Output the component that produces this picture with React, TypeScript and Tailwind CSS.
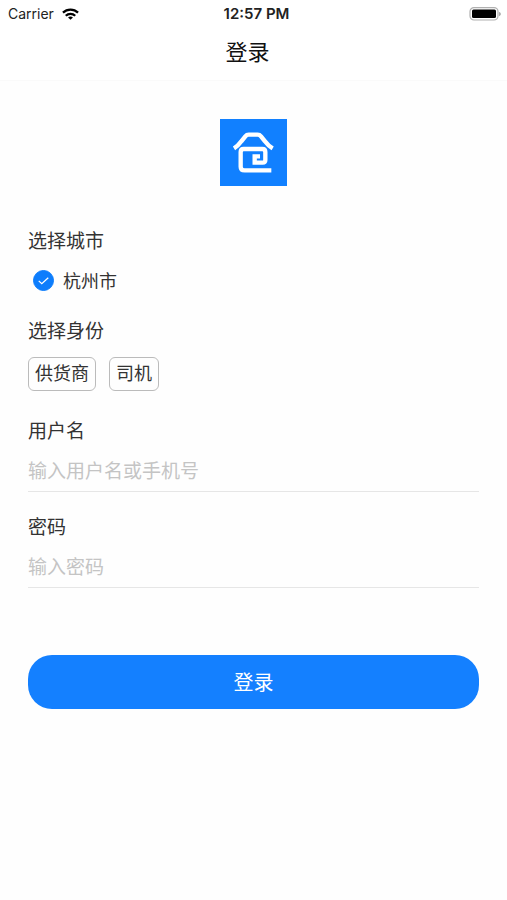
import { useState } from "react";

const roles = ["供货商", "司机"];

function StatusBar() {
  return (
    <div className="grid h-7 grid-cols-3 items-center pr-1.5 pl-2 font-['Inter',sans-serif] text-sm text-[#222]">
      <div className="flex items-center gap-2">
        <span>Carrier</span>
        <svg className="h-3 w-[17px]" viewBox="0 0 18 12" fill="none" stroke="#000" strokeWidth="2.4" aria-hidden>
          <path d="M1 4.6a11.6 11.6 0 0 1 16 0" />
          <path d="M4 7.9a7.2 7.2 0 0 1 10 0" />
          <path d="M9 12 6.4 9.8a3.8 3.8 0 0 1 5.2 0z" fill="#000" stroke="none" />
        </svg>
      </div>
      <span className="pl-1 text-center text-[15px] font-semibold">12:57 PM</span>
      <svg className="h-[14px] w-8 justify-self-end" viewBox="0 0 32 14" aria-hidden>
        <rect x="1" y="0.6" width="28" height="12.400" rx="4" fill="#fff" stroke="#b0b0b0" strokeWidth="1.2" />
        <rect x="3" y="2.6" width="24" height="8.4" rx="1.500" fill="#000" />
        <path d="M30.2 5v4.200c1-.4 1.500-1.200 1.500-2.100S31.200 5.400 30.200 5z" fill="#999" />
      </svg>
    </div>
  );
}

function Logo() {
  return (
    <svg className="mx-auto block size-[67px]" viewBox="0 0 201 201" fill="none" stroke="#fff" role="img" aria-label="仓">
      <rect width="201" height="201" fill="#1180ff" stroke="none" />
      <path d="M42 88Q55 80 64 67L76 52Q80 47 86 47H113Q119 47 123 52L135 67Q144 80 158 88" strokeWidth="13" />
      <path d="M120 112H104V131H128Q136 131 136 123V99Q136 90 127 90H71Q62 90 62 99V143Q62 154 74 154H154" strokeWidth="13" />
    </svg>
  );
}

type FieldProps = {
  id: string;
  label: string;
  placeholder: string;
  type?: string;
};

function Field({ id, label, placeholder, type = "text" }: FieldProps) {
  return (
    <div>
      <label htmlFor={id} className="block text-[19px] leading-7">
        {label}
      </label>
      <input
        id={id}
        type={type}
        placeholder={placeholder}
        className="mt-3 block w-full border-b border-[#e6e6e6] bg-transparent pb-[7px] text-[19px] leading-7 outline-none placeholder:text-[#c4c4c4]"
      />
    </div>
  );
}

export default function App() {
  const [role, setRole] = useState("");

  return (
    <div className="min-h-screen bg-[#fefefe] font-['Noto_Sans_CJK_SC',sans-serif] text-[#333]">
      <header className="border-b border-[#fafafa] bg-white">
        <StatusBar />
        <h1 className="pt-1.5 pr-3 pb-3.5 text-center text-[22px] leading-8 text-[#111]">登录</h1>
      </header>

      <form className="px-7 pt-[38px]" onSubmit={(e) => e.preventDefault()}>
        <Logo />

        <fieldset className="mt-10">
          <legend className="text-[19px] leading-7">选择城市</legend>
          <label className="mt-3 flex items-center gap-[9px] pl-[5px] text-lg leading-7">
            <span className="relative size-[21px]">
              <input
                type="radio"
                name="city"
                defaultChecked
                className="peer block size-full appearance-none rounded-full border border-gray-300 checked:border-[#0d7dfc] checked:bg-[#0d7dfc]"
              />
              <svg
                className="pointer-events-none absolute inset-0 hidden peer-checked:block"
                viewBox="0 0 22 22"
                fill="none"
                stroke="#fff"
                strokeWidth="1.3"
                aria-hidden
              >
                <path d="m6 11.400 3.200 3 6.800-6.200" />
              </svg>
            </span>
            杭州市
          </label>
        </fieldset>

        <fieldset className="mt-[22px]">
          <legend className="text-[19px] leading-7">选择身份</legend>
          <div className="mt-[13px] flex gap-[13px]">
            {roles.map((name) => (
              <button
                key={name}
                type="button"
                aria-pressed={role === name}
                onClick={() => setRole(name)}
                className="rounded-md border border-[#bbb] px-1.5 pb-1 text-lg leading-7 aria-pressed:border-[#1180ff] aria-pressed:text-[#1180ff]"
              >
                {name}
              </button>
            ))}
          </div>
        </fieldset>

        <div className="mt-[25px] space-y-5">
          <Field id="username" label="用户名" placeholder="输入用户名或手机号" />
          <Field id="password" label="密码" placeholder="输入密码" type="password" />
        </div>

        <button type="submit" className="mt-[67px] h-[54px] w-full rounded-3xl bg-[#1480ff] text-[20px] text-white">
          登录
        </button>
      </form>
    </div>
  );
}
